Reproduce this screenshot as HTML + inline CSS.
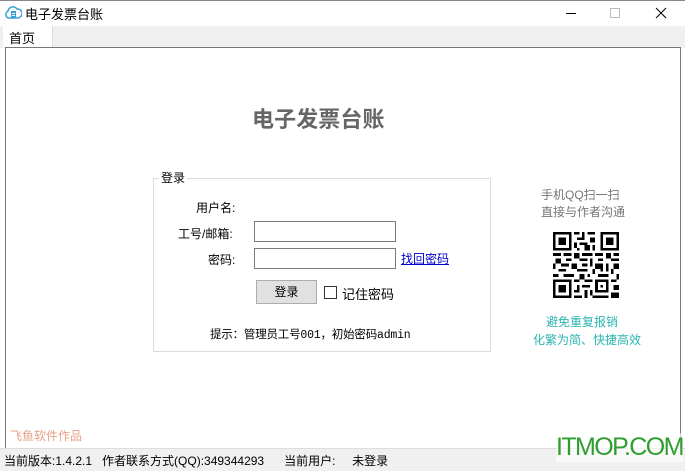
<!DOCTYPE html>
<html><head><meta charset="utf-8">
<style>
*{margin:0;padding:0;box-sizing:border-box}
body{width:685px;height:471px;background:#fff;position:relative;overflow:hidden;font-family:"Liberation Sans","Noto Sans CJK SC","WenQuanYi Zen Hei",sans-serif;font-size:12px;color:#000}
.abs{position:absolute;white-space:nowrap}
input.t{position:absolute;height:21px;border:1px solid #7a7a7a;background:#fff}
</style></head><body>
<div class="abs" style="left:0;top:0;width:685px;height:1px;background:#888"></div>
<svg class="abs" style="left:4px;top:5px" width="18" height="16" viewBox="0 0 18 16"><path d="M4 13 A4 4 0 0 1 4 6 A5 5 0 0 1 13 4 A4.5 4.5 0 0 1 14 13 Z" fill="none" stroke="#3a9fd8" stroke-width="1.5"/><rect x="7" y="6" width="5" height="7" fill="#3a9fd8"/><rect x="8" y="8" width="3" height="1" fill="#fff"/><rect x="8" y="10" width="3" height="1" fill="#fff"/></svg>
<div class="abs" style="left:25px;top:4px;font-size:13px">电子发票台账</div>
<div class="abs" style="left:566px;top:13px;width:10px;height:1px;background:#000"></div>
<div class="abs" style="left:610px;top:8px;width:10px;height:10px;border:1px solid #bbb"></div>
<svg class="abs" style="left:655px;top:7px" width="12" height="12"><path d="M1 1L11 11M11 1L1 11" stroke="#000" stroke-width="1"/></svg>
<div class="abs" style="left:0;top:26px;width:685px;height:22px;background:#f0f0f0"></div>
<div class="abs" style="left:3px;top:26px;width:50px;height:21px;background:#fff;border-right:1px solid #ddd;font-size:13px;padding:2px 0 0 6px">首页</div>
<div class="abs" style="left:5px;top:47px;width:676px;height:401px;background:#fff;border:1px solid #777;border-bottom:none"></div>
<div class="abs" style="left:252px;top:102px;font-size:22px;font-weight:bold;color:#666;letter-spacing:0.1px">电子发票台账</div>
<div class="abs" style="left:153px;top:178px;width:338px;height:174px;border:1px solid #dcdcdc"></div>
<div class="abs" style="left:159px;top:169px;background:#fff;padding:0 2px;font-size:12px">登录</div>
<div class="abs" style="left:196px;top:199px">用户名:</div>
<div class="abs" style="left:178px;top:225px">工号/邮箱:</div>
<div class="abs" style="left:208px;top:251px">密码:</div>
<input class="t" style="left:254px;top:221px;width:142px">
<input class="t" style="left:254px;top:248px;width:142px">
<div class="abs" style="left:401px;top:250px;color:#00c;text-decoration:underline">找回密码</div>
<div class="abs" style="left:256px;top:280px;width:61px;height:24px;background:#e1e1e1;border:1px solid #adadad;text-align:center;line-height:22px">登录</div>
<div class="abs" style="left:324px;top:286px;width:13px;height:13px;border:1px solid #333;background:#fff"></div>
<div class="abs" style="left:342px;top:284px;font-size:13px">记住密码</div>
<div class="abs" style="left:210px;top:326px;font-family:'Liberation Mono','Noto Sans CJK SC',monospace;font-size:11.5px;letter-spacing:-0.2px">提示：管理员工号001，初始密码admin</div>
<div class="abs" style="left:541px;top:186px;color:#777;font-size:12px">手机QQ扫一扫</div>
<div class="abs" style="left:541px;top:203px;color:#777;font-size:12px">直接与作者沟通</div>
<svg class="abs" style="left:553px;top:232px" width="66" height="66" viewBox="0 0 25 25" shape-rendering="crispEdges">
<g fill="#000">
<path d="M0 0h7v7h-7zM18 0h7v7h-7zM0 18h7v7h-7z"/>
</g>
<g fill="#fff"><path d="M1 1h5v5h-5zM19 1h5v5h-5zM1 19h5v5h-5z"/></g>
<g fill="#000"><path d="M2 2h3v3h-3zM20 2h3v3h-3zM2 20h3v3h-3z"/>
<path d="M8 0h2v1h-2zM11 0h1v2h-1zM13 0h3v1h-3zM9 2h3v1h-3zM14 2h2v2h-2zM8 4h1v2h-1zM10 4h3v1h-3zM12 5h2v2h-2zM15 5h1v2h-1zM9 6h1v1h-1z
M0 8h3v1h-3zM4 8h3v1h-3zM8 8h2v2h-2zM11 8h4v1h-4zM16 8h3v1h-3zM20 8h2v2h-2zM23 8h2v1h-2z
M1 10h2v2h-2zM5 10h2v1h-2zM10 10h3v1h-3zM14 10h1v3h-1zM17 10h2v1h-2zM22 10h3v1h-3z
M0 12h1v2h-1zM3 12h3v1h-3zM7 12h2v2h-2zM11 12h2v1h-2zM16 12h3v2h-3zM20 12h1v3h-1zM23 12h2v2h-2z
M2 14h3v1h-3zM9 14h4v1h-4zM15 14h1v2h-1zM18 14h1v1h-1zM22 14h1v2h-1z
M0 16h2v1h-2zM4 16h4v1h-4zM10 16h2v2h-2zM13 16h1v1h-1zM17 16h4v1h-4zM24 16h1v2h-1z
M8 18h2v1h-2zM12 18h3v1h-3zM16 18h5v5h-5zM22 18h2v1h-2z
M9 20h1v2h-1zM11 20h3v1h-3zM23 20h2v2h-2zM8 22h2v1h-2zM12 22h1v3h-1zM14 22h1v2h-1zM22 23h3v2h-3zM8 24h3v1h-3zM15 24h6v1h-6z"/></g>
<path d="M17 19h3v3h-3z" fill="#fff"/><path d="M18 20h1v1h-1z" fill="#000"/>
</svg>
<div class="abs" style="left:546px;top:313px;color:#2cb5b0;font-size:12px">避免重复报销</div>
<div class="abs" style="left:533px;top:331px;color:#2cb5b0;font-size:12px">化繁为简、快捷高效</div>
<div class="abs" style="left:10px;top:427px;color:#e8a088;font-size:12px">飞鱼软件作品</div>
<div class="abs" style="left:0;top:448px;width:685px;height:23px;background:#f0f0f0;border-top:1px solid #ddd"></div>
<div class="abs" style="left:4px;top:452px;font-size:12px">当前版本:1.4.2.1&nbsp;&nbsp; 作者联系方式(QQ):349344293&nbsp;&nbsp;&nbsp;&nbsp;&nbsp; 当前用户:&nbsp;&nbsp;&nbsp;&nbsp; 未登录</div>
<div class="abs" style="left:556px;top:433px;color:#2e9e2e;font-size:25px;letter-spacing:-1.6px;background:rgba(255,255,255,0.6)">ITMOP.COM</div>
</body></html>
